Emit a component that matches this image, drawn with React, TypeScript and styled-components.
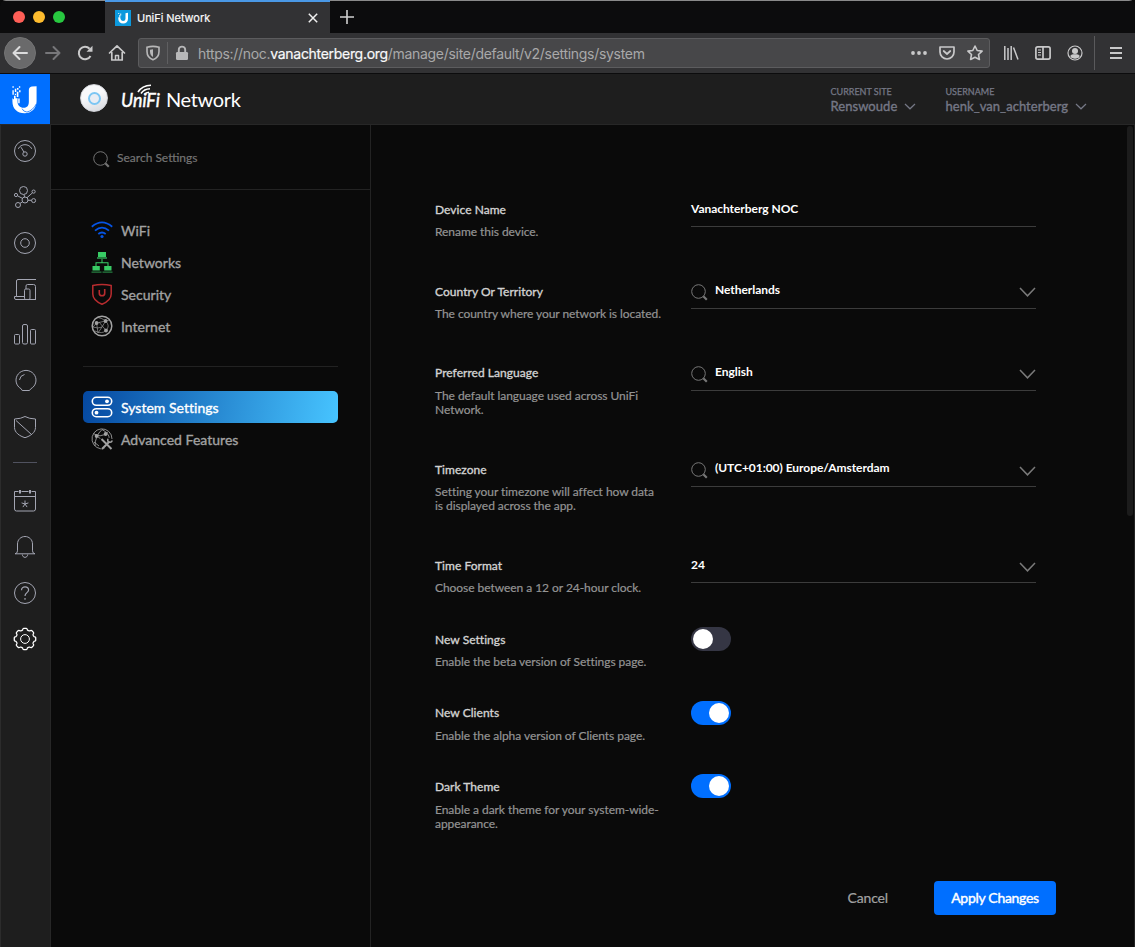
import React from "react";
import styled, { createGlobalStyle } from "styled-components";

const Global = createGlobalStyle`
  * { box-sizing: border-box; }
  html, body { margin: 0; padding: 0; background: #0a0a0a; }
  body { width: 1135px; height: 947px; overflow: hidden; font-family: Lato, "Liberation Sans", sans-serif; }
  button, input { font: inherit; }
  svg { display: block; flex: none; }
`;

const Window = styled.div`
  width: 1135px;
  height: 947px;
  display: flex;
  flex-direction: column;
  background: #0a0a0a;
  border-radius: 6px 6px 0 0;
  overflow: hidden;
`;

/* Browser chrome */
const TabBar = styled.div`
  height: 33px;
  flex: none;
  display: flex;
  background: #0c0c0d;
  box-shadow: inset 0 1px #8a8a8a;
  font-family: Inter, "Liberation Sans", sans-serif;
`;
const Lights = styled.div`
  width: 105px;
  display: flex;
  align-items: center;
  gap: 8px;
  padding: 1px 0 0 13px;
`;
const Light = styled.span<{ $c: string }>`
  width: 12px;
  height: 12px;
  border-radius: 50%;
  background: ${(p) => p.$c};
`;
const Tab = styled.div`
  width: 225px;
  display: flex;
  align-items: center;
  padding: 0 12px 0 10px;
  background: #323234;
  border-top: 2px solid #4a98e6;
  color: #f9f9fa;
  font-size: 11px;
`;
const TabTitle = styled.span`
  margin-left: 6px;
  flex: 1;
  letter-spacing: -0.05px;
  -webkit-text-stroke: 0.2px;
`;
const NewTab = styled.div`
  display: flex;
  align-items: center;
  padding-left: 10px;
`;
const Toolbar = styled.div`
  height: 41px;
  flex: none;
  display: flex;
  align-items: center;
  background: #323234;
  border-bottom: 1px solid #0c0c0d;
  padding-left: 4px;
`;
const Back = styled.div`
  width: 32px;
  height: 32px;
  border-radius: 50%;
  background: #6a6a6b;
  border: 1px solid #747475;
  display: flex;
  align-items: center;
  justify-content: center;
`;
const Slot = styled.div<{ $w: number }>`
  width: ${(p) => p.$w}px;
  display: flex;
  justify-content: center;
`;
const UrlBar = styled.div`
  width: 852px;
  height: 30px;
  margin-left: 6px;
  display: flex;
  align-items: center;
  background: #474749;
  border: 1px solid #5c5c5e;
  border-radius: 3px;
  padding: 0 6px;
`;
const UrlDivider = styled.span`
  width: 1px;
  height: 22px;
  margin: 0 7px 0 6px;
  background: #5f5f61;
`;
const Url = styled.span`
  flex: 1;
  margin-left: 9px;
  font-family: Inter, "Liberation Sans", sans-serif;
  font-size: 14px;
  letter-spacing: -0.3px;
  color: #a9a9aa;
  b { font-weight: 400; color: #f9f9fa; -webkit-text-stroke: 0.2px; }
`;
const UrlActions = styled.div`
  display: flex;
  align-items: center;
  gap: 12px;
`;
const ToolbarRight = styled.div`
  flex: 1;
  height: 100%;
  display: flex;
  align-items: center;
  padding-left: 12px;
`;
const ToolbarRule = styled.span`
  width: 1px;
  height: 34px;
  margin-left: 10px;
  margin-right: 15px;
  background: #5a5a5c;
`;

/* Application */
const Header = styled.header`
  height: 51px;
  flex: none;
  display: flex;
  background: #1e1e1e;
  border-bottom: 1px solid #272727;
`;
const Brand = styled.div`
  width: 50px;
  height: 50px;
  background: #006fff;
  display: flex;
  align-items: center;
  justify-content: center;
  padding-right: 2px;
`;
const Product = styled.div`
  width: 780.5px;
  display: flex;
  align-items: center;
  padding-left: 30px;
`;
const AccessPoint = styled.span`
  width: 28px;
  height: 28px;
  margin-top: -2px;
  border-radius: 50%;
  background: linear-gradient(160deg, #f8f9fb 40%, #d5d7dc);
  border: 1px solid #d2d4d9;
  display: flex;
  align-items: center;
  justify-content: center;
`;
const Ring = styled.span`
  width: 13px;
  height: 13px;
  border-radius: 50%;
  border: 2px solid #7cc6f3;
  background: #e9edf4;
`;
const Wordmark = styled.span`
  position: relative;
  width: 40px;
  height: 30px;
  margin-left: 13px;
  color: #fff;
  svg { position: absolute; left: 16px; top: 0; }
`;
const WordmarkText = styled.span`
  display: block;
  font: italic 400 20px/31px Lato, sans-serif;
  -webkit-text-stroke: 0.5px;
  transform: scaleX(0.89);
  transform-origin: 0 50%;
  white-space: nowrap;
`;
const ProductName = styled.span`
  margin-left: 5px;
  font-size: 20px;
  line-height: 30px;
  letter-spacing: -0.35px;
  color: #fff;
`;
const Account = styled.div<{ $w: number }>`
  width: ${(p) => p.$w}px;
  padding-top: 11px;
  color: #757886;
`;
const AccountCaption = styled.div`
  font-size: 9px;
  line-height: 13px;
  -webkit-text-stroke: 0.25px;
`;
const AccountValue = styled.div`
  display: flex;
  align-items: center;
  gap: 7px;
  font-size: 13px;
  line-height: 16px;
  letter-spacing: 0.05px;
  -webkit-text-stroke: 0.35px;
`;

const Body = styled.div`
  flex: 1;
  min-height: 0;
  display: flex;
`;
const Rail = styled.nav`
  width: 51px;
  flex: none;
  padding: 3px 1px 0 0;
  background: #1e1e1e;
  border-left: 1px solid #2c2c2c;
  border-right: 1px solid #272727;
  color: #a3a5b2;
`;
const RailItem = styled.div<{ $active?: boolean }>`
  height: 46px;
  display: flex;
  align-items: center;
  justify-content: center;
  color: ${(p) => (p.$active ? "#ffffff" : "inherit")};
`;
const RailRule = styled.div`
  width: 24px;
  height: 1px;
  margin: 12px auto 15px;
  background: #50525f;
`;
const Sidebar = styled.aside`
  width: 320px;
  flex: none;
  border-right: 1px solid #232323;
`;
const Search = styled.div`
  height: 65px;
  display: flex;
  align-items: center;
  padding: 5px 0 0 42px;
  gap: 7px;
  border-bottom: 1px solid #232323;
  color: #747474;
  font-size: 12px;
  line-height: 16px;
  span { margin-top: -4px; -webkit-text-stroke: 0.2px; }
`;
const Menu = styled.div`
  padding: 24px 32px 0 32px;
`;
const MenuItem = styled.div<{ $active?: boolean }>`
  height: 32px;
  display: flex;
  align-items: center;
  gap: 8px;
  padding-left: 8px;
  border-radius: 5px;
  font-size: 14px;
  letter-spacing: 0.02px;
  -webkit-text-stroke: 0.35px;
  color: ${(p) => (p.$active ? "#ffffff" : "#a2a2a2")};
  background: ${(p) => (p.$active ? "linear-gradient(100deg, #0548a0, #47c4ff)" : "none")};
  span { padding-top: 1px; }
`;
const MenuRule = styled.div`
  height: 1px;
  margin: 24px 0 24px;
  background: #222;
`;
const Content = styled.main`
  flex: 1;
  display: flex;
  justify-content: space-between;
`;
const Form = styled.div`
  width: 685px;
  padding: 76px 0 0 64px;
`;
const Row = styled.div<{ $h: number }>`
  height: ${(p) => p.$h}px;
  display: grid;
  grid-template-columns: 256px 345px;
`;
const Label = styled.div`
  font-size: 12px;
  line-height: 18px;
  letter-spacing: 0.04px;
  color: #d2d2d2;
  -webkit-text-stroke: 0.35px;
`;
const Hint = styled.div`
  width: 228px;
  margin-top: 6.3px;
  font-size: 12px;
  line-height: 14px;
  letter-spacing: -0.05px;
  color: #949494;
  -webkit-text-stroke: 0.2px;
`;
const Field = styled.div`
  height: 32px;
  margin-top: -5.9px;
  display: flex;
  align-items: center;
  border-bottom: 1px solid #3c3c3c;
  color: #fff;
`;
const FieldIcon = styled.span`
  margin: 0 7px 0 0;
  color: #777;
`;
const FieldArrow = styled.span`
  color: #7a7a7a;
`;
const Value = styled.span<{ $raised?: boolean }>`
  flex: 1;
  padding-bottom: ${(p) => (p.$raised ? 6 : 4)}px;
  font-size: 12px;
  font-weight: 700;
  letter-spacing: -0.04px;
`;
const Switch = styled.div<{ $on?: boolean }>`
  width: 40px;
  height: 24px;
  margin-top: -3.85px;
  padding: 2px;
  border-radius: 12px;
  display: flex;
  justify-content: ${(p) => (p.$on ? "flex-end" : "flex-start")};
  background: ${(p) => (p.$on ? "#006fff" : "#353644")};
  &::after { content: ""; width: 20px; height: 20px; border-radius: 50%; background: #fff; }
`;
const Actions = styled.div`
  display: flex;
  justify-content: flex-end;
  align-items: center;
  margin-top: 24px;
  gap: 46px;
`;
const CancelButton = styled.button`
  border: 0;
  padding: 0 0 1px;
  background: none;
  color: #a2a2a2;
  font-size: 14px;
  letter-spacing: -0.15px;
  -webkit-text-stroke: 0.2px;
`;
const ApplyButton = styled.button`
  width: 122px;
  height: 34px;
  border: 0;
  padding: 0 0 1px;
  border-radius: 4px;
  background: #006fff;
  color: #fff;
  font-size: 14px;
  letter-spacing: -0.3px;
  -webkit-text-stroke: 0.4px;
`;
const ScrollTrack = styled.div`
  width: 8px;
  border-right: 1px solid #242424;
`;
const ScrollThumb = styled.div`
  width: 6px;
  height: 390px;
  margin-top: 1px;
  border-radius: 3px;
  background: #1c1c1c;
`;

const stroke = { fill: "none", stroke: "currentColor", strokeWidth: 1 } as const;

const Glass = () => (
  <svg width="17" height="17" viewBox="0 0 17 17" {...stroke}>
    <circle cx="7.5" cy="7.5" r="6.8" />
    <path d="M12.3 12.3l3.5 3.5" strokeWidth="2.2" />
  </svg>
);
const Chevron = ({ w, h, s = 1.2 }: { w: number; h: number; s?: number }) => (
  <svg width={w} height={h} viewBox={`0 0 ${w} ${h}`} {...stroke} strokeWidth={s}>
    <path d={`M1 1L${w / 2} ${h - 1.2}L${w - 1} 1`} />
  </svg>
);

/* The pixelated U: solid right arm and bowl, scattered squares on the left arm */
const UMark = ({ size }: { size: number }) => (
  <svg width={size} height={size} viewBox="0 0 30 30">
    <g fill="#fff">
      <path d="M19.500 5.200Q19.500 2.400 22.500 1.600L27.500 1.200v15.500C27.500 24 22 29.200 15 29.200 7.500 29.200 2.500 24.500 2.500 17v-3.200l1.600 1.300V11h1.700v2.600h2V17c0 4.200 2.600 6.300 6 6.500 4 .2 5.700-2.200 5.700-6.500z" />
      <path d="M2.500 1.400h1.400v1.400H2.500zM5 4h1.500v3.200H5zM2.500 5.500h1.400v4.500H2.500zM7.200 3.200h1.600v1.600H7.200zM9.200 1.400h1.400v1.400H9.200zM7 7h1.700v5.400H7zM9.400 5.400h1.500v2H9.400zM8.500 14h1.500v5H8.500zM5 9h1.200v1.400H5z" />
    </g>
    <path d="M12.500 24.500q1 3 5 3.500c4-1 7.500-4 9.800-8.500" fill="none" stroke="#006fff" strokeWidth="0.8" />
  </svg>
);

const Ico = ({ children }: { children: React.ReactNode }) => (
  <svg width="24" height="24" viewBox="0 0 24 24" {...stroke}>
    {children}
  </svg>
);

const railTop = [
  <Ico key="dashboard">
    <circle cx="12" cy="12" r="10.5" />
    <path d="M5.3 9.8C7.8 4.3 16.2 4.3 18.7 9.8M8 8.2l3 5" />
    <circle cx="12" cy="15" r="2.2" />
  </Ico>,
  <Ico key="topology">
    <circle cx="10.5" cy="5.5" r="4" />
    <circle cx="12" cy="15" r="3" />
    <circle cx="3" cy="10" r="1.6" />
    <circle cx="20.6" cy="6.6" r="1.6" />
    <circle cx="20.6" cy="15.6" r="2" />
    <circle cx="5" cy="20" r="2.5" />
    <path d="M11 9.5l.5 2.5M4.5 10.8l5 2.6M19.5 7.8L14 12.7M15 15.3h3.6M7 18.4l2.7-1.7" />
  </Ico>,
  <Ico key="devices">
    <circle cx="12" cy="12" r="10.5" />
    <circle cx="12" cy="12" r="4.3" />
  </Ico>,
  <Ico key="clients">
    <path d="M23 2.500H5Q3.500 2.500 3.500 4v15.500H1.500v1.500q0 1.500 1.500 1.500h20M22.500 22.500v-13q0-2-2-2h-6q-1.500 0-1.500 1.500v3" />
    <path d="M3.500 19.500h8" />
    <rect x="11.500" y="12" width="5.500" height="10.500" rx="1.300" />
  </Ico>,
  <Ico key="statistics">
    <rect x="1.500" y="11.500" width="5" height="9.500" rx="1" />
    <rect x="9.500" y="1.500" width="5" height="19.500" rx="1.500" />
    <rect x="17.500" y="6.500" width="5" height="14.500" rx="1" />
  </Ico>,
  <Ico key="insights">
    <path d="M8.200 19.800A10 9.800 0 1 1 17.800 19.800L16.500 21.500h-7.300z" />
    <path d="M6.500 11q.5-4.500 5-5.500" />
  </Ico>,
  <Ico key="shield">
    <path d="M1.500 4Q8 3.800 12 1.500 16 3.800 22.500 4v8.500c0 5-5 8.500-10.500 10.200C6.500 21 1.500 17.500 1.500 12.500zM3 5.500l15.500 14" />
  </Ico>,
];
const railBottom = [
  <Ico key="events">
    <path d="M5.500 2.500H1.500V20q0 2 2 2h17q2 0 2-2V2.500h-4M8.500 2.500h7M2 7.500h20M12 11.500v3.500M8.600 13.900l3.400 1.100 3.400-1.100M9.900 18.100l2.100-3.100 2.100 3.100" />
    <path d="M7 1v3.500M17 1v3.500" strokeWidth="2" />
  </Ico>,
  <Ico key="alerts">
    <path d="M2 18.800q2.500-.4 2.500-3V9C4.500 4.500 8 1.500 12 1.500S19.500 4.500 19.500 9v6.800q0 2.600 2.500 3zM9.300 19.500c.2 3.800 5.200 3.800 5.400 0" />
  </Ico>,
  <Ico key="help">
    <circle cx="12" cy="12" r="10.5" />
    <path d="M8.500 9.300C8.500 4.500 15.600 5 15.600 9c0 2.700-3.600 2.700-3.600 6M12 17v1.700" strokeWidth="1.200" />
  </Ico>,
];

/* One lobe per 45 degrees, joined by shallow notches */
const gearPath = Array.from({ length: 8 }, (_, i) => {
  const at = (deg: number, r: number) => {
    const a = ((i * 45 + deg) * Math.PI) / 180;
    return `${(12 + r * Math.sin(a)).toFixed(2)} ${(12 - r * Math.cos(a)).toFixed(2)}`;
  };
  return `${i ? "L" : "M"}${at(-15, 9.3)}Q${at(-12, 10.8)} ${at(-7, 10.8)}L${at(7, 10.8)}Q${at(12, 10.8)} ${at(15, 9.3)}Q${at(22.5, 8.6)} ${at(30, 9.3)}`;
}).join("") + "Z";
const Gear = () => (
  <Ico>
    <path strokeWidth="1.300" strokeLinejoin="round" d={gearPath} />
    <circle cx="12" cy="12" r="4.400" />
  </Ico>
);

const Globe = ({ tools }: { tools?: boolean }) => (
  <svg width="22" height="22" viewBox="0 0 22 22" {...stroke}>
    {tools ? (
      <path d="M14 20.400A10 10 0 1 1 21 11M2.500 5.500q6 5 14.500-1M4 18Q4 8 11 1.500M11 1.500Q18 5 18.500 11M6 8l5 4M3 14l5 4" opacity="0.85" />
    ) : (
      <>
        <circle cx="11" cy="11" r="9.800" strokeWidth="1.500" />
        <path d="M5.600 8L14.600 6M2 12l3.600-4 1.400 10M8 7l7 8.500M14.600 6q5 5 .4 9.500M4 16q7 3.500 11-.5M7 2.500q4 .5 7.600 3.500M7 18l4-6M11 12l3.600-6M14.600 6l4-1M2 12q5 2 9 0" opacity="0.65" />
      </>
    )}
    <g fill="currentColor" stroke="none">
      <circle cx="5.600" cy="8" r="1.900" />
      <circle cx="14.600" cy="6" r="1.900" />
      {!tools && <circle cx="15" cy="15.500" r="1.900" />}
    </g>
    {tools && (
      <g>
        <path d="M10 10l11 11M20 11l-9.500 10" stroke="#0a0a0a" strokeWidth="4" />
        <path d="M10.500 11l10 10M11 21l7.500-7.500" strokeWidth="2" />
        <path d="M17 10.800q-1 3 1.700 3.500 2 .2 2.600-1.800" strokeWidth="1.500" />
      </g>
    )}
  </svg>
);

const WifiIcon = () => (
  <svg width="22" height="22" viewBox="0 0 22 22" fill="none" stroke="#0554e6" strokeWidth="1.800">
    <path d="M.8 7.800Q11-1 21.200 7.800M4 11.600q7-6 14 0M7.300 15q3.700-3 7.400 0" />
    <circle cx="11" cy="17.500" r="1.600" fill="#0554e6" stroke="none" />
  </svg>
);
const NetworkIcon = () => (
  <svg width="22" height="22" viewBox="0 0 22 22" fill="#38cc65">
    <path d="M7 1h8v5H7zM1.500 15h7.300v4.500H1.500zM13.200 15h7.300v4.500h-7.300z" />
    <path d="M6 6h10v2H6zM.5 20.500h10v1.300H.5zM11.500 20.500h10v1.300h-10z" opacity="0.600" />
    <path d="M10.500 8h1v3.200h6V15h-1v-2.800h-11V15h-1v-3.800h6z" />
  </svg>
);
const SecurityIcon = () => (
  <svg width="22" height="22" viewBox="0 0 22 22" fill="none" stroke="#b82c2f" strokeWidth="1.500">
    <path d="M1.800 2.500Q11 .4 20.200 2.500V11c0 5-4 8-9.200 10.300C5.800 19 1.800 16 1.800 11z" />
    <path d="M8.300 7v3.200c0 3.400 5.400 3.400 5.400 0V6" strokeWidth="1.600" />
  </svg>
);
const SystemIcon = () => (
  <svg width="22" height="22" viewBox="0 0 22 22" fill="none" stroke="#fff" strokeWidth="1.600">
    <rect x="1.300" y="1.300" width="19.400" height="8" rx="4" />
    <rect x="1.300" y="12.700" width="19.400" height="8" rx="4" />
    <circle cx="16" cy="5.300" r="1.900" fill="#fff" stroke="none" />
    <circle cx="5.500" cy="16.700" r="1.900" fill="#fff" stroke="none" />
  </svg>
);

const BackArrow = ({ flip }: { flip?: boolean }) => (
  <svg width="16" height="16" viewBox="0 0 16 16" fill="none" stroke={flip ? "#77777a" : "#dcdcdd"} strokeWidth="2" strokeLinecap="round" strokeLinejoin="round">
    <path d={flip ? "M1 8h13.500M8.500 2l6 6-6 6" : "M15 8H1.500M7.500 2l-6 6 6 6"} />
  </svg>
);
const bar = "#c9c9ca";

interface RowSpec {
  label: string;
  hint: string;
  h: number;
  value?: string;
  search?: boolean;
  select?: boolean;
  on?: boolean;
}
const rows: RowSpec[] = [
  { label: "Device Name", hint: "Rename this device.", h: 81.7, value: "Vanachterberg NOC" },
  { label: "Country Or Territory", hint: "The country where your network is located.", h: 81.75, value: "Netherlands", search: true, select: true },
  { label: "Preferred Language", hint: "The default language used across UniFi Network.", h: 96.55, value: "English", search: true, select: true },
  { label: "Timezone", hint: "Setting your timezone will affect how data is displayed across the app.", h: 96, value: "(UTC+01:00) Europe/Amsterdam", search: true, select: true },
  { label: "Time Format", hint: "Choose between a 12 or 24-hour clock.", h: 74.15, value: "24", select: true },
  { label: "New Settings", hint: "Enable the beta version of Settings page.", h: 73.33, on: false },
  { label: "New Clients", hint: "Enable the alpha version of Clients page.", h: 73.85, on: true },
  { label: "Dark Theme", hint: "Enable a dark theme for your system-wide-appearance.", h: 78.67, on: true },
];

export default function App() {
  return (
    <>
      <Global />
      <Window>
        <TabBar>
          <Lights>
            <Light $c="#ff5f57" />
            <Light $c="#febc2e" />
            <Light $c="#28c840" />
          </Lights>
          <Tab>
            <svg width="16" height="16" viewBox="0 0 16 16">
              <rect width="16" height="16" fill="#0c99dd" />
              <path d="M10.500 3.300l2.500-.6v6c0 3-2 4.800-4.800 4.800S3.300 11.700 3.300 9V7l1 .8V5h1v3c.3 2 1.500 3 2.800 3s2.400-.8 2.400-2.500z" fill="#fff" />
              <path d="M3.300 3h.9v1h-.9zM5.300 3.500h.9v2h-.9z" fill="#fff" />
            </svg>
            <TabTitle>UniFi Network</TabTitle>
            <svg width="10" height="10" viewBox="0 0 10 10" stroke="#f0f0f0" strokeWidth="1.500">
              <path d="M.8.8l8.400 8.400M9.200.8L.8 9.200" />
            </svg>
          </Tab>
          <NewTab>
            <svg width="14" height="14" viewBox="0 0 14 14" stroke="#d0d0d0" strokeWidth="1.600">
              <path d="M7 0v14M0 7h14" />
            </svg>
          </NewTab>
        </TabBar>
        <Toolbar>
          <Back><BackArrow /></Back>
          <Slot $w={33}><BackArrow flip /></Slot>
          <Slot $w={32}>
            <svg width="16" height="16" viewBox="0 0 16 16" fill="none" stroke={bar} strokeWidth="2">
              <path d="M13.500 11A6.200 6.200 0 1 1 12.600 3.800" />
              <path d="M15.500.8v6h-6z" fill={bar} stroke="none" />
            </svg>
          </Slot>
          <Slot $w={31}>
            <svg width="18" height="18" viewBox="0 0 18 18" fill="none" stroke={bar} strokeWidth="1.700" strokeLinejoin="round">
              <path d="M1.500 9L9 1.800 16.500 9M3.800 8.500v7.500h10.400V8.500" strokeLinecap="round" />
              <path d="M7.500 16v-4.500h3V16" strokeWidth="1.500" />
            </svg>
          </Slot>
          <UrlBar>
            <svg width="16" height="16" viewBox="0 0 16 16" fill="none" stroke="#b8b8b9" strokeWidth="1.600">
              <path d="M2 2.200Q8 .5 14 2.200V6.500c0 4-2.500 7-6 8.300-3.500-1.300-6-4.300-6-8.300z" />
              <path d="M8 4.200V12C6 10.800 5 9 5 6.500V4.700z" fill="#b8b8b9" stroke="none" />
            </svg>
            <UrlDivider />
            <svg width="14" height="16" viewBox="0 0 14 16">
              <rect x="1" y="7" width="12" height="8" rx="1.200" fill="#b8b8b9" />
              <path d="M3.800 7.500V4.800a3.200 3.200 0 0 1 6.400 0v2.700" fill="none" stroke="#b8b8b9" strokeWidth="1.900" />
            </svg>
            <Url>https://noc.<b>vanachterberg.org</b>/manage/site/default/v2/settings/system</Url>
            <UrlActions>
              <svg width="16" height="16" viewBox="0 0 16 16" fill={bar}>
                <circle cx="2" cy="8" r="1.900" /><circle cx="8" cy="8" r="1.900" /><circle cx="14" cy="8" r="1.900" />
              </svg>
              <svg width="16" height="16" viewBox="0 0 16 16" fill="none" stroke={bar} strokeWidth="1.700" strokeLinecap="round" strokeLinejoin="round">
                <path d="M1 2h14v5a7 7 0 0 1-14 0zM4.700 6L8 9l3.300-3" />
              </svg>
              <svg width="16" height="16" viewBox="0 0 16 16" fill="none" stroke={bar} strokeWidth="1.600" strokeLinejoin="round">
                <path d="M8 1l2.200 4.500 4.900.6-3.600 3.400.9 5L8 12.200 3.600 14.500l.9-5L.9 6.100l4.900-.6z" />
              </svg>
            </UrlActions>
          </UrlBar>
          <ToolbarRight>
            <Slot $w={18}>
              <svg width="16" height="16" viewBox="0 0 16 16" fill="none" stroke={bar} strokeWidth="1.500">
                <path d="M1.800 1v14M5 3v12M8.200 1v14M10.500 2.500L15 14.500" />
              </svg>
            </Slot>
            <Slot $w={46}>
              <svg width="16" height="14" viewBox="0 0 16 14" fill="none" stroke={bar} strokeWidth="1.700">
                <rect x=".9" y=".9" width="14.200" height="12.200" rx="1.800" />
                <path d="M8 1v12" />
                <path d="M3 4h3M3 6.500h3M3 9h3" strokeWidth="1" />
              </svg>
            </Slot>
            <Slot $w={18}>
              <svg width="16" height="16" viewBox="0 0 16 16" fill={bar}>
                <circle cx="8" cy="8" r="7" fill="none" stroke={bar} strokeWidth="1.200" />
                <circle cx="8" cy="6" r="3" />
                <path d="M3.200 11q1-1.600 2.800-1.700h4q1.800.1 2.800 1.700A5.600 5.600 0 0 1 3.200 11z" />
              </svg>
            </Slot>
            <ToolbarRule />
            <svg width="12" height="12" viewBox="0 0 12 12" stroke={bar} strokeWidth="2">
              <path d="M0 1h12M0 6h12M0 11h12" />
            </svg>
          </ToolbarRight>
        </Toolbar>

        <Header>
          <Brand><UMark size={29} /></Brand>
          <Product>
            <AccessPoint><Ring /></AccessPoint>
            <Wordmark>
              <WordmarkText>UniFi</WordmarkText>
              <svg width="16" height="14" viewBox="0 0 16 14" fill="none" stroke="#fff" strokeWidth="1.600">
                <path d="M1 8Q5 1.500 14 1.200M4 9.500Q7 5 13 4.800M7.500 10.500Q9 8.300 12 8.200" />
              </svg>
            </Wordmark>
            <ProductName>Network</ProductName>
          </Product>
          <Account $w={115}>
            <AccountCaption>CURRENT SITE</AccountCaption>
            <AccountValue>Renswoude<Chevron w={12} h={7} s={1.2} /></AccountValue>
          </Account>
          <Account $w={160}>
            <AccountCaption>USERNAME</AccountCaption>
            <AccountValue>henk_van_achterberg<Chevron w={12} h={7} s={1.2} /></AccountValue>
          </Account>
        </Header>

        <Body>
          <Rail>
            {railTop.map((icon, i) => <RailItem key={i}>{icon}</RailItem>)}
            <RailRule />
            {railBottom.map((icon, i) => <RailItem key={i}>{icon}</RailItem>)}
            <RailItem $active><Gear /></RailItem>
          </Rail>
          <Sidebar>
            <Search><Glass /><span>Search Settings</span></Search>
            <Menu>
              <MenuItem><WifiIcon /><span>WiFi</span></MenuItem>
              <MenuItem><NetworkIcon /><span>Networks</span></MenuItem>
              <MenuItem><SecurityIcon /><span>Security</span></MenuItem>
              <MenuItem><Globe /><span>Internet</span></MenuItem>
              <MenuRule />
              <MenuItem $active><SystemIcon /><span>System Settings</span></MenuItem>
              <MenuItem><Globe tools /><span>Advanced Features</span></MenuItem>
            </Menu>
          </Sidebar>
          <Content>
            <Form>
              {rows.map((r) => (
                <Row key={r.label} $h={r.h}>
                  <div>
                    <Label>{r.label}</Label>
                    <Hint>{r.hint}</Hint>
                  </div>
                  {r.value ? (
                    <Field>
                      {r.search && <FieldIcon><Glass /></FieldIcon>}
                      <Value $raised={r.search}>{r.value}</Value>
                      {r.select && <FieldArrow><Chevron w={17} h={10} s={1.500} /></FieldArrow>}
                    </Field>
                  ) : (
                    <Switch $on={r.on} />
                  )}
                </Row>
              ))}
              <Actions>
                <CancelButton>Cancel</CancelButton>
                <ApplyButton>Apply Changes</ApplyButton>
              </Actions>
            </Form>
            <ScrollTrack><ScrollThumb /></ScrollTrack>
          </Content>
        </Body>
      </Window>
    </>
  );
}
